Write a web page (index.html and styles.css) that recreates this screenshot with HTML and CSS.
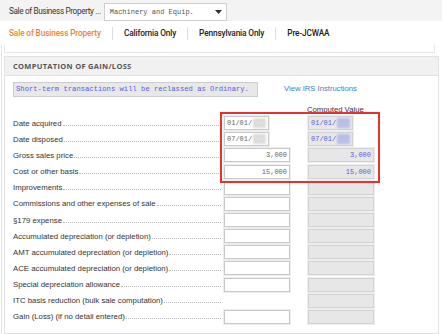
FILE: index.html
```html
<!DOCTYPE html>
<html>
<head>
  <title>Sale of Business Property</title>
  <link rel="stylesheet" href="styles.css">
</head>
<body>
  <div class="topbar">
    <span class="crumb">Sale of Business Property ...</span>
    <div class="select">
      <span>Machinery and Equip.</span>
      <svg class="caret" width="7" height="4" viewBox="0 0 7 4"><path d="M0 0h7L3.5 4z" fill="#333"/></svg>
    </div>
  </div>

  <ul class="tabs">
    <li class="active">Sale of Business Property</li>
    <li>California Only</li>
    <li>Pennsylvania Only</li>
    <li>Pre-JCWAA</li>
  </ul>

  <div class="frame">
    <div class="strip"></div>
    <section class="panel">
      <h2 class="panel-title">Computation of Gain/Loss</h2>
      <div class="panel-body">
        <div class="notice-row">
          <div class="notice">Short-term transactions will be reclassed as Ordinary.</div>
          <a class="irs-link" href="#">View IRS Instructions</a>
        </div>
        <div class="col-head">Computed Value</div>

        <div class="row">
          <div class="lead"><span>Date acquired</span><i></i></div>
          <div class="box date">01/01/<b></b></div>
          <div class="box calc date">01/01/<b></b></div>
        </div>
        <div class="row">
          <div class="lead"><span>Date disposed</span><i></i></div>
          <div class="box date">07/01/<b></b></div>
          <div class="box calc date">07/01/<b></b></div>
        </div>
        <div class="row">
          <div class="lead"><span>Gross sales price</span><i></i></div>
          <div class="box num">3,000</div>
          <div class="box calc num">3,000</div>
        </div>
        <div class="row">
          <div class="lead"><span>Cost or other basis</span><i></i></div>
          <div class="box num">15,000</div>
          <div class="box calc num">15,000</div>
        </div>
        <div class="row">
          <div class="lead"><span>Improvements</span><i></i></div>
          <div class="box"></div>
          <div class="box calc"></div>
        </div>
        <div class="row">
          <div class="lead"><span>Commissions and other expenses of sale</span><i></i></div>
          <div class="box"></div>
          <div class="box calc"></div>
        </div>
        <div class="row">
          <div class="lead"><span>&sect;179 expense</span><i></i></div>
          <div class="box"></div>
          <div class="box calc"></div>
        </div>
        <div class="row">
          <div class="lead"><span>Accumulated depreciation (or depletion)</span><i></i></div>
          <div class="box"></div>
          <div class="box calc"></div>
        </div>
        <div class="row">
          <div class="lead"><span>AMT accumulated depreciation (or depletion)</span><i></i></div>
          <div class="box"></div>
          <div class="box calc"></div>
        </div>
        <div class="row">
          <div class="lead"><span>ACE accumulated depreciation (or depletion)</span><i></i></div>
          <div class="box"></div>
          <div class="box calc"></div>
        </div>
        <div class="row">
          <div class="lead"><span>Special depreciation allowance</span><i></i></div>
          <div class="box"></div>
          <div class="box calc"></div>
        </div>
        <div class="row">
          <div class="lead"><span>ITC basis reduction (bulk sale computation)</span><i></i></div>
          <div class="box empty"></div>
          <div class="box calc"></div>
        </div>
        <div class="row">
          <div class="lead"><span>Gain (Loss) (if no detail entered)</span><i></i></div>
          <div class="box"></div>
          <div class="box calc"></div>
        </div>

        <!-- annotation drawn over the date / price rows -->
        <div class="highlight"></div>
      </div>
    </section>
  </div>
</body>
</html>
```

FILE: styles.css
```css
/* Sale of Business Property - computation screen */
body {
  margin: 0;
  font-family: "Liberation Sans", Arial, sans-serif;
  color: #333;
  background: #fff;
}

.topbar {
  height: 21px;
  background: #f3f3f3;
  display: flex;
  align-items: center;
  padding-left: 9px;
}

.crumb {
  font-family: Roboto, "Liberation Sans", sans-serif;
  font-size: 8.2px;
  letter-spacing: -0.35px;
  color: #333;
  margin-right: 3px;
}

.select {
  width: 123px;
  height: 18px;
  box-sizing: border-box;
  margin-top: 3px;
  background: #fff;
  border: 1px solid #cfcfcf;
  display: flex;
  align-items: center;
  justify-content: space-between;
  padding: 0 4px 0 5px;
  font-family: "Liberation Mono", monospace;
  font-size: 7px;
  color: #555;
}

.tabs {
  list-style: none;
  margin: 0;
  padding: 0 0 0 9px;
  height: 24px;
  display: flex;
  align-items: center;
}

.tabs li {
  font-family: Roboto, "Liberation Sans", sans-serif;
  font-weight: 500;
  font-size: 8.3px;
  letter-spacing: -0.15px;
  color: #222;
  padding: 0 11px;
  border-left: 1px solid #dedede;
  line-height: 13px;
}

.tabs li:first-child {
  padding-left: 0;
  border-left: none;
}

.tabs li.active {
  color: #f5841f;
}

.frame {
  border-left: 1px solid #e4e4e4;
  margin-left: 1px;
  min-height: 289px;
}

.strip {
  height: 7px;
  margin: 0 7px 0 2px;
  border: 1px solid #e6e6e6;
  border-top: none;
}

.panel {
  margin: 3px 3px 0 2px;
  border: 1px solid #e2e2e2;
  height: 276px;
}

.panel-title {
  margin: 0;
  height: 18px;
  line-height: 18px;
  background: #f1f1f1;
  border-bottom: 1px solid #e2e2e2;
  padding-left: 8px;
  font-family: "Open Sans", "Liberation Sans", sans-serif;
  font-size: 7.5px;
  font-weight: 700;
  letter-spacing: 0.3px;
  text-transform: uppercase;
  color: #555;
}

.panel-body {
  position: relative;
  padding: 6px 64px 0 8px;
}

.notice-row {
  display: flex;
  align-items: center;
  height: 15px;
}

.notice {
  width: 245px;
  height: 15px;
  box-sizing: border-box;
  background: #e8e8e8;
  border: 1px solid #cdcdcd;
  padding-left: 2px;
  font-family: "Liberation Mono", monospace;
  font-size: 7.2px;
  line-height: 13px;
  color: #5a5ae6;
  white-space: nowrap;
  overflow: hidden;
}

.irs-link {
  margin-left: 26px;
  margin-top: -3px;
  font-size: 7.7px;
  color: #3c7fc4;
  text-decoration: none;
}

.col-head {
  margin: 7px 0 0 294px;
  height: 11px;
  line-height: 11px;
  font-size: 7.7px;
  color: #333;
}

.row {
  display: grid;
  grid-template-columns: 1fr 69px 84px;
  align-items: center;
  height: 16.17px;
}

.lead {
  display: flex;
  align-items: baseline;
  font-size: 7.8px;
  color: #333;
  white-space: nowrap;
  overflow: hidden;
}

.lead i {
  flex: 1;
  border-bottom: 1px dotted #b9b9b9;
  margin: 0 0 0 1px;
}

.box {
  width: 66px;
  height: 14px;
  box-sizing: border-box;
  margin-left: 3px;
  background: #fff;
  border: 1px solid #c9c9c9;
  box-shadow: 0 0 0 1px #ededed;
  font-family: "Liberation Mono", monospace;
  font-size: 7px;
  line-height: 12px;
  color: #666;
  padding: 0 2px;
  display: flex;
  align-items: center;
}

.box.calc {
  margin-left: 18px;
  background: #e7e7e7;
  border-color: #d2d2d2;
  color: #5b5bea;
}

.box.date {
  width: 45px;
}

.box.num {
  justify-content: flex-end;
}

.box.empty {
  visibility: hidden;
}

/* redacted year */
.box b {
  display: inline-block;
  width: 17px;
  height: 10px;
  margin-left: 1px;
  background: #dcdcdc;
  filter: blur(0.8px);
}

.box.calc b {
  background: #b9bee8;
}

.highlight {
  position: absolute;
  left: 215px;
  top: 36px;
  width: 160px;
  height: 71px;
  box-sizing: border-box;
  border: 2px solid #e8302e;
}
```
